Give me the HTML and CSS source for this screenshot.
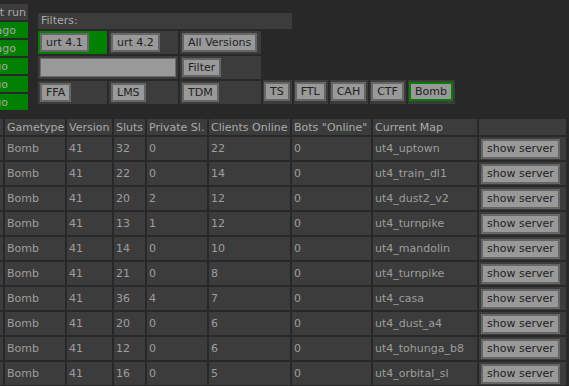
FILE: index.html
```
<!DOCTYPE html>
<html lang="en">
<head>
  <meta charset="utf-8">
  <meta name="viewport" content="width=device-width, initial-scale=1.0">
  <title>Server list</title>
  <link rel="stylesheet" href="styles.css">
</head>
<body>
  <main class="page">
    <div class="top">
      <div class="runs">
        <table class="runs-table">
          <tr><th>last run</th></tr>
          <tr><td class="go">12 min ago</td></tr>
          <tr><td class="go">14 min ago</td></tr>
          <tr><td class="go short">3 min ago</td></tr>
          <tr><td class="go short">5 min ago</td></tr>
          <tr><td class="go short">7 min ago</td></tr>
        </table>
      </div>

      <div class="filters">
        <div class="filters-title">Filters:</div>
        <div class="cell on"><button>urt 4.1</button></div>
        <div class="cell"><button>urt 4.2</button></div>
        <div class="cell"><button>All Versions</button></div>
        <div class="cell wide"><input type="text"></div>
        <div class="cell"><button>Filter</button></div>
        <div class="cell first"><button>FFA</button></div>
        <div class="cell"><button>LMS</button></div>
        <div class="cell"><button>TDM</button></div>
        <div class="types">
          <div class="type"><button>TS</button></div>
          <div class="type"><button>FTL</button></div>
          <div class="type"><button>CAH</button></div>
          <div class="type"><button>CTF</button></div>
          <div class="type"><button class="picked">Bomb</button></div>
        </div>
      </div>
    </div>

    <table class="servers">
      <tr>
        <th class="c-name">Name</th>
        <th class="c-type">Gametype</th>
        <th class="c-ver">Version</th>
        <th class="c-slots">Sluts</th>
        <th class="c-priv">Private Sl.</th>
        <th class="c-clients">Clients Online</th>
        <th class="c-bots">Bots "Online"</th>
        <th class="c-map">Current Map</th>
        <th class="c-btn"></th>
      </tr>
      <tr><td>server</td><td>Bomb</td><td>41</td><td>32</td><td>0</td><td>22</td><td>0</td><td>ut4_uptown</td><td><button>show server</button></td></tr>
      <tr><td>server</td><td>Bomb</td><td>41</td><td>22</td><td>0</td><td>14</td><td>0</td><td>ut4_train_dl1</td><td><button>show server</button></td></tr>
      <tr><td>server</td><td>Bomb</td><td>41</td><td>20</td><td>2</td><td>12</td><td>0</td><td>ut4_dust2_v2</td><td><button>show server</button></td></tr>
      <tr><td>server</td><td>Bomb</td><td>41</td><td>13</td><td>1</td><td>12</td><td>0</td><td>ut4_turnpike</td><td><button>show server</button></td></tr>
      <tr><td>server</td><td>Bomb</td><td>41</td><td>14</td><td>0</td><td>10</td><td>0</td><td>ut4_mandolin</td><td><button>show server</button></td></tr>
      <tr><td>server</td><td>Bomb</td><td>41</td><td>21</td><td>0</td><td>8</td><td>0</td><td>ut4_turnpike</td><td><button>show server</button></td></tr>
      <tr><td>server</td><td>Bomb</td><td>41</td><td>36</td><td>4</td><td>7</td><td>0</td><td>ut4_casa</td><td><button>show server</button></td></tr>
      <tr><td>server</td><td>Bomb</td><td>41</td><td>20</td><td>0</td><td>6</td><td>0</td><td>ut4_dust_a4</td><td><button>show server</button></td></tr>
      <tr><td>server</td><td>Bomb</td><td>41</td><td>12</td><td>0</td><td>6</td><td>0</td><td>ut4_tohunga_b8</td><td><button>show server</button></td></tr>
      <tr><td>server</td><td>Bomb</td><td>41</td><td>16</td><td>0</td><td>5</td><td>0</td><td>ut4_orbital_sl</td><td><button>show server</button></td></tr>
    </table>
  </main>
</body>
</html>
```

FILE: styles.css
```
html, body {
  overflow: hidden;
}

body {
  margin: 0;
  background-color: #282828;
  color: #9e9e9e;
  font-family: "DejaVu Sans", Verdana, sans-serif;
  font-size: 11px;
}

button {
  height: 19px;
  padding: 0 4px;
  background-color: #999;
  color: #222;
  border: 2px solid #666;
  border-radius: 0;
  font-family: inherit;
  font-size: 11px;
  line-height: 13px;
  white-space: nowrap;
}

.top {
  display: flex;
  align-items: flex-start;
}

/* left list, scrolled mostly out of view */
.runs {
  width: 30px;
  margin-top: 2px;
  overflow: hidden;
  display: flex;
  justify-content: flex-end;
  flex-shrink: 0;
}

.runs-table {
  border-spacing: 2px;
  flex-shrink: 0;
  white-space: nowrap;
}

.runs-table th,
.runs-table td {
  height: 16px;
  padding: 0 2px 0 0;
  text-align: right;
  font-weight: normal;
  background-color: #3c3c3c;
  color: #aaa;
}

.runs-table .go {
  background-color: #008000;
  color: #a8a8a8;
  padding-right: 12px;
}

.runs-table .go.short {
  padding-right: 20px;
}

/* filters */
.filters {
  display: grid;
  grid-template-columns: 69px 69px 81px 29px;
  grid-template-rows: 16px 23px 23px 23px;
  gap: 2px;
  margin: 13px 0 0 8px;
}

.filters-title {
  grid-column: 1 / -1;
  padding: 0 3px;
  line-height: 16px;
  background-color: #3c3c3c;
  color: #aaa;
}

.cell {
  padding: 2px;
  background-color: #3c3c3c;
}

.cell.on {
  background-color: #008000;
}

.cell.wide {
  grid-column: 1 / span 2;
}

.cell.first {
  grid-column: 1;
}

.cell input {
  display: block;
  width: 100%;
  height: 19px;
  box-sizing: border-box;
  margin: 0;
  background-color: #999;
  border: 1px solid #6a6a6a;
}

.types {
  display: flex;
  gap: 2px;
  margin-top: -1px;
}

.type {
  flex-shrink: 0;
  padding: 2px 2px 2px 1px;
  background-color: #3c3c3c;
}

button.picked {
  border-color: #008000;
}

/* server list */
.servers {
  table-layout: fixed;
  width: 667px;
  margin: 5px 0 0 -99px;
  border-spacing: 2px;
  white-space: nowrap;
}

.servers th,
.servers td {
  padding: 0 2px;
  text-align: left;
  font-weight: normal;
  background-color: #3c3c3c;
  overflow: hidden;
}

.servers th {
  height: 16px;
  color: #aaa;
}

.servers td {
  height: 23px;
}

.servers td button {
  height: 20px;
  display: block;
}

.c-name { width: 96px; }
.c-type { width: 56px; }
.c-ver { width: 41px; }
.c-slots { width: 27px; }
.c-priv { width: 56px; }
.c-clients { width: 77px; }
.c-bots { width: 75px; }
.c-map { width: 100px; }
.c-btn { width: 83px; }
```
